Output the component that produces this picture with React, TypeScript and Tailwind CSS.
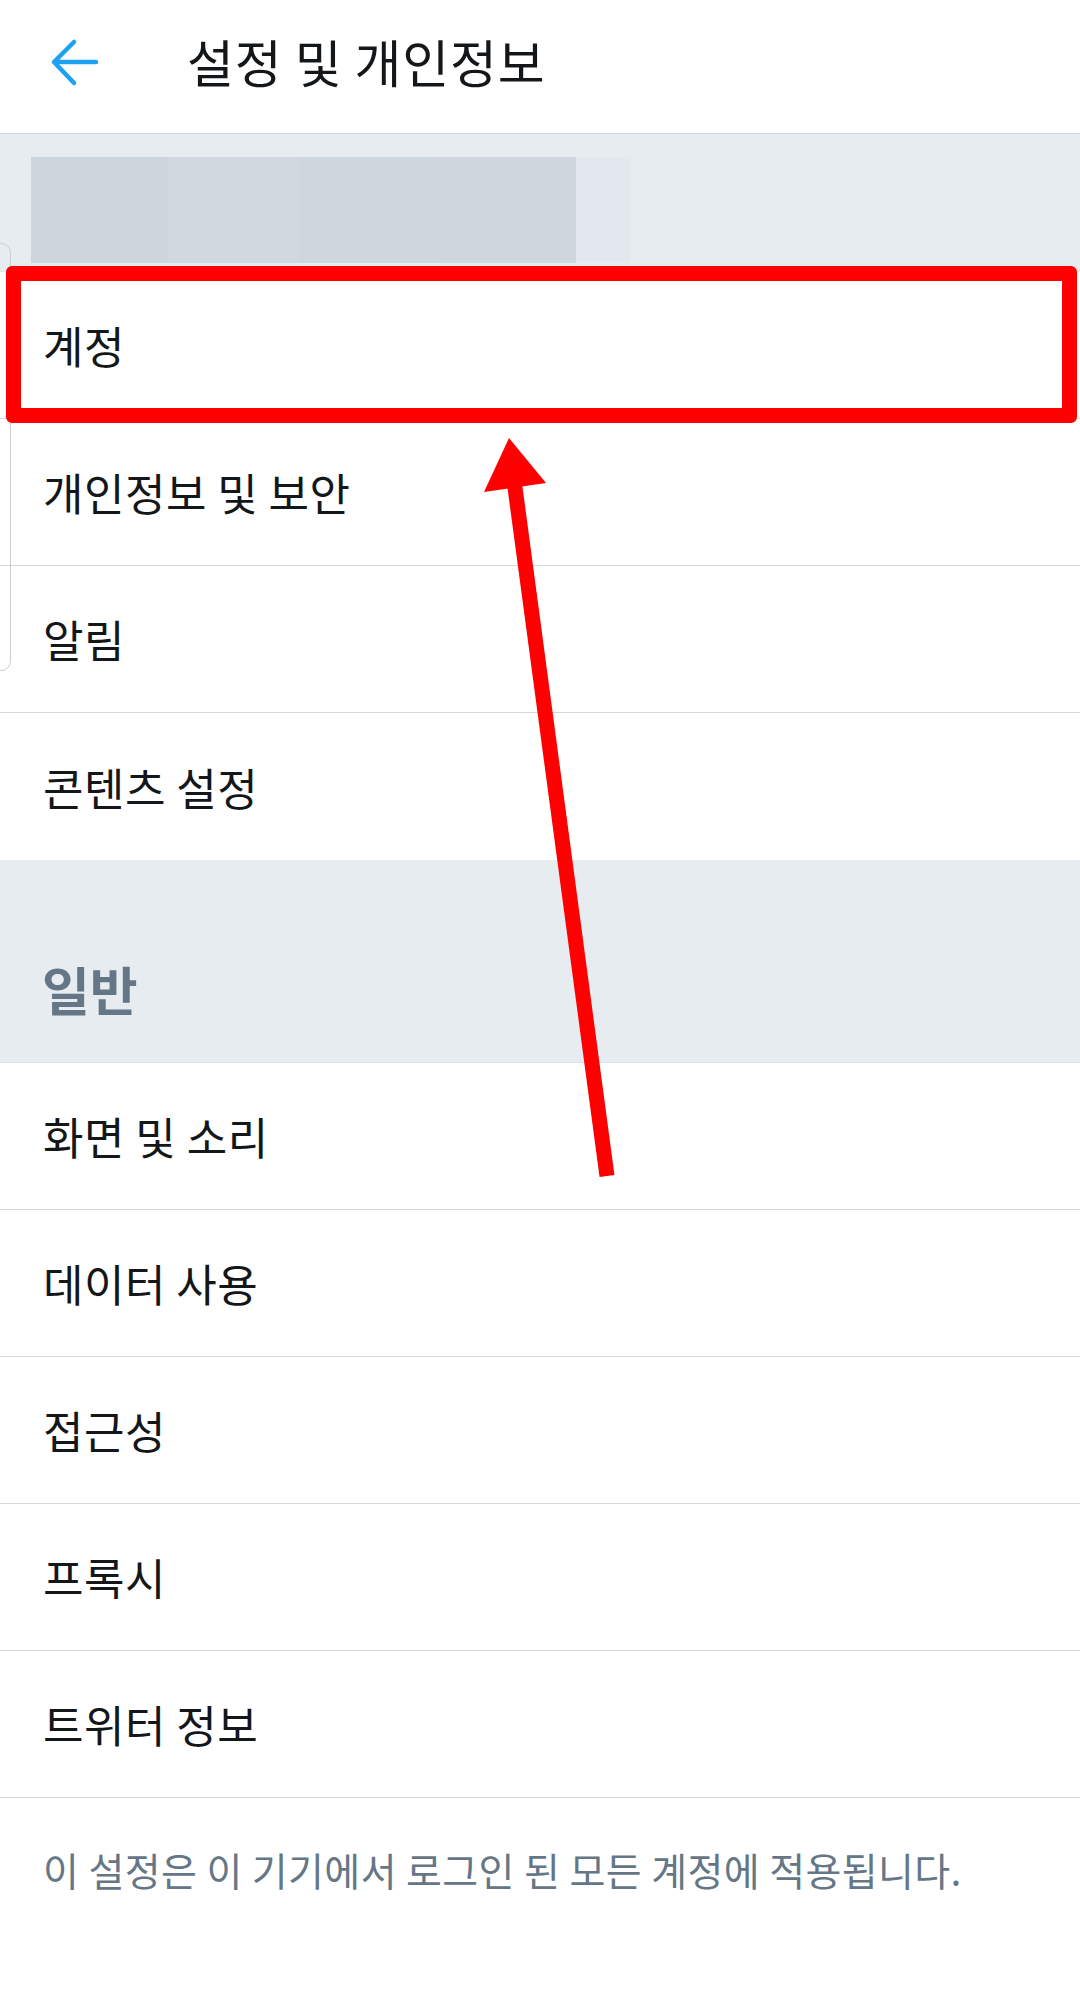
const SECTION_ONE = ["계정", "개인정보 및 보안", "알림", "콘텐츠 설정"];
const SECTION_TWO = ["화면 및 소리", "데이터 사용", "접근성", "프록시", "트위터 정보"];

function Row({ label, last }: { label: string; last?: boolean }) {
  return (
    <div
      className={
        "flex h-[147px] items-center px-[43px] text-[44px] tracking-[0.5px] text-[#14171a] " +
        (last ? "" : "border-b border-[#d6d6d6]")
      }
    >
      {label}
    </div>
  );
}

export default function App() {
  return (
    <div
      className="relative h-[2004px] w-[1080px] overflow-hidden bg-white"
      style={{ fontFamily: '"Noto Sans CJK KR", "Noto Sans", sans-serif' }}
    >
      <header className="flex h-[134px] items-center border-b border-[#d2d2d2] pb-[10px]">
        <svg className="ml-[48px] h-[52px] w-[52px]" viewBox="48 34 52 52" fill="none">
          <path
            d="M96 60H55M74 40L54 60L74 81"
            stroke="#1da1f2"
            strokeWidth="4.5"
            strokeLinecap="round"
            strokeLinejoin="round"
          />
        </svg>
        <h1 className="ml-[87px] text-[51px] font-normal tracking-[0.8px] text-[#14171a]">설정 및 개인정보</h1>
      </header>

      <div className="flex h-[138px] bg-[#e6ecf0] pl-[31px] pt-[23px]">
        <div className="flex h-[106px]">
          <div className="w-[137px] bg-[#ced6dd]" />
          <div className="w-[131px] bg-[#d1d8df]" />
          <div className="w-[141px] bg-[#ced6de]" />
          <div className="w-[136px] bg-[#d0d7de]" />
          <div className="w-[55px] bg-[#e2e8ed]" />
        </div>
      </div>

      <div>
        {SECTION_ONE.map((label, i) => (
          <Row key={label} label={label} last={i === SECTION_ONE.length - 1} />
        ))}
      </div>

      <div className="flex h-[203px] items-end border-b border-[#dde3e8] bg-[#e6ecf0] px-[42px] pb-[34px]">
        <span className="text-[52px] font-bold text-[#657786]">일반</span>
      </div>

      <div>
        {SECTION_TWO.map((label) => (
          <Row key={label} label={label} />
        ))}
      </div>

      <p className="px-[43px] pt-[42px] text-[39px] tracking-[0.4px] text-[#657786]">
        이 설정은 이 기기에서 로그인 된 모든 계정에 적용됩니다.
      </p>

      {/* edge of a card peeking in from the left */}
      <div className="absolute left-[-20px] top-[243px] h-[428px] w-[31px] rounded-[10px] border border-[#cdcdcd]" />

      {/* annotation: red box + arrow */}
      <div className="absolute left-[6px] top-[266px] h-[157px] w-[1071px] rounded-[6px] border-[15px] border-[#fe0000]" />
      <svg className="absolute left-0 top-0" width="1080" height="2004" viewBox="0 0 1080 2004">
        <line x1="607" y1="1176" x2="514" y2="480" stroke="#fe0000" strokeWidth="15" />
        <polygon points="509,438 484,492 546,483" fill="#fe0000" />
      </svg>
    </div>
  );
}
